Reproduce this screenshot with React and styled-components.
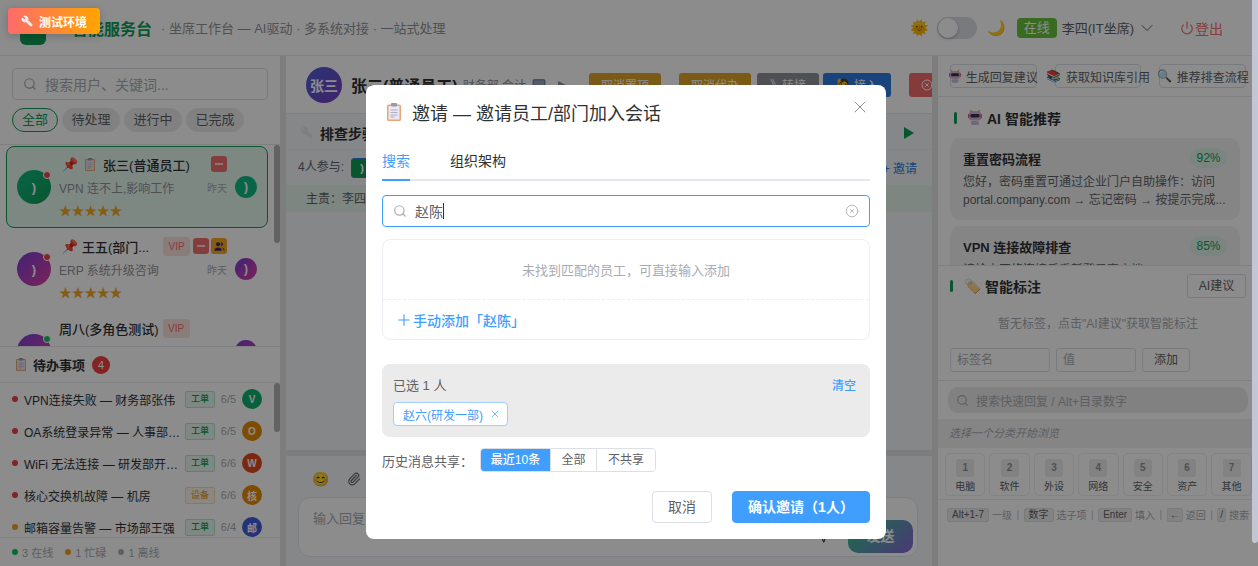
import React from 'react'
import styled, { createGlobalStyle } from 'styled-components'
import { Search, ChevronDown, Power, X, Plus, CircleX, Send, Wrench, Paperclip, Users, Monitor } from 'lucide-react'

const GlobalStyle = createGlobalStyle`
  * { box-sizing: border-box; }
  html, body { margin: 0; padding: 0; height: 100%; overflow: hidden; }
  body {
    font-family: "Liberation Sans", "Noto Sans CJK SC", sans-serif;
    color: #303133;
    background: #fff;
  }
`

const green = '#0f9d58'
const blue = '#409eff'

const Page = styled.div`
  position: relative;
  width: 1258px;
  height: 566px;
  overflow: hidden;
  display: flex;
  flex-direction: column;
`

/* ---------- header ---------- */
const Header = styled.header`
  height: 56px;
  flex: none;
  display: flex;
  align-items: center;
  padding: 0 35px 0 20px;
  border-bottom: 1px solid #e4e7ed;
  background: #fff;
`
const Logo = styled.div`
  width: 26px;
  height: 26px;
  border-radius: 6px;
  background: ${green};
  margin-right: 26px;
  margin-top: 8px;
`
const Brand = styled.div`
  font-size: 16px;
  font-weight: 700;
  color: ${green};
  white-space: nowrap;
`
const Tagline = styled.div`
  margin-left: 9px;
  font-size: 13px;
  color: #909399;
  white-space: nowrap;
`
const HeaderRight = styled.div`
  margin-left: auto;
  display: flex;
  align-items: center;
`
const Toggle = styled.div`
  width: 40px;
  height: 22px;
  border-radius: 11px;
  background: #dcdfe6;
  margin: 0 10px 0 8px;
  padding: 1px;
  span {
    display: block;
    width: 20px;
    height: 20px;
    border-radius: 50%;
    background: #fff;
    box-shadow: 0 1px 3px rgba(0, 0, 0, 0.3);
  }
`
const Emoji = styled.span`
  font-size: ${(p) => p.$size || 14}px;
  line-height: 1;
  flex: none;
  font-style: normal;
  margin-left: ${(p) => p.$ml || 0}px;
  margin-right: ${(p) => p.$mr || 0}px;
`
const OnlineTag = styled.div`
  margin-left: 11px;
  width: 40px;
  height: 20px;
  border-radius: 4px;
  background: #67c23a;
  color: #fff;
  font-size: 13px;
  line-height: 20px;
  text-align: center;
`
const AgentName = styled.div`
  margin-left: 5px;
  font-size: 13px;
  color: #606266;
  display: flex;
  align-items: center;
  gap: 3px;
  white-space: nowrap;
`
const Logout = styled.div`
  margin-left: 23px;
  color: #f56c6c;
  font-size: 14px;
  display: flex;
  align-items: center;
  gap: 1px;
`

/* ---------- small drawn icons ---------- */
const ClipboardIcon = ({ h = 14 }) => (
  <svg width={(h * 14) / 18} height={h} viewBox="0 0 14 18" style={{ flex: 'none' }}>
    <rect x="0" y="1.5" width="14" height="16.5" rx="1.5" fill="#e8a678" />
    <rect x="1.5" y="3" width="11" height="13.5" fill="#ece8f2" />
    <rect x="4" y="0" width="6" height="3.5" rx="1" fill="#9a9aa6" />
    <path d="M3.5 7h7M3.5 9.5h7M3.5 12h7M3.5 14h4" stroke="#b0aec4" strokeWidth="1" />
  </svg>
)
const RobotIcon = ({ size = 14 }) => (
  <svg width={size} height={size * 1.15} viewBox="0 0 14 16" style={{ flex: 'none' }}>
    <path d="M3 4 L1.5 0.5 L5 2.5 H9 L12.5 0.5 L11 4Z" fill="#e8a63c" />
    <rect x="1" y="2.5" width="12" height="9" rx="2.5" fill="#d9b4d8" />
    <rect x="2.5" y="5" width="9" height="3.5" rx="1" fill="#30364a" />
    <rect x="0" y="5" width="1.5" height="4" fill="#e85a8a" />
    <rect x="12.5" y="5" width="1.5" height="4" fill="#e85a8a" />
    <rect x="3" y="12" width="8" height="4" rx="1.5" fill="#c9c4dc" />
  </svg>
)
const Spanner = styled(Wrench)`
  flex: none;
  transform: scaleX(-1);
`
const DeviceIcon = styled(Monitor)`
  flex: none;
  margin-left: 6px;
  color: #5a7aa0;
`

/* ---------- columns ---------- */
const Columns = styled.div`
  flex: 1;
  min-height: 0;
  display: flex;
`
const Left = styled.aside`
  width: 280px;
  flex: none;
  display: flex;
  flex-direction: column;
  background: #fff;
`
const Gutter = styled.div`
  width: 6px;
  flex: none;
  background: #e4e4e4;
`
const Center = styled.main`
  width: 646px;
  flex: none;
  display: flex;
  flex-direction: column;
  background: #f5f6f8;
`
const Right = styled.aside`
  flex: 1;
  min-width: 0;
  display: flex;
  flex-direction: column;
  background: #fff;
`

/* ---------- left: sessions ---------- */
const SearchArea = styled.div`
  padding: 12px 12px 12px;
  border-bottom: 1px solid #e8e8e8;
`
const SearchBox = styled.div`
  height: 32px;
  border: 1px solid #dcdfe6;
  border-radius: 4px;
  display: flex;
  align-items: center;
  gap: 8px;
  padding: 0 10px;
  font-size: 14px;
  color: #a8abb2;
  white-space: nowrap;
`
const Chips = styled.div`
  display: flex;
  gap: 4px;
  margin-top: 8px;
`
const Chip = styled.div`
  width: ${(p) => p.$w}px;
  height: 24px;
  text-align: center;
  border-radius: 12px;
  font-size: 13px;
  line-height: 22px;
  color: ${(p) => (p.$active ? green : '#606266')};
  background: ${(p) => (p.$active ? '#f6fbf8' : '#ececec')};
  border: 1px solid ${(p) => (p.$active ? green : '#ececec')};
`
const SessionList = styled.div`
  position: relative;
  flex: 1;
  min-height: 0;
  overflow: hidden;
  padding-top: 1px;
`
const Thumb = styled.div`
  position: absolute;
  right: 0;
  top: ${(p) => p.$top}px;
  width: 6px;
  height: ${(p) => p.$h}px;
  border-radius: 3px;
  background: #b3b3b3;
`
const SessionCard = styled.div`
  width: 262px;
  height: 82px;
  flex: none;
  margin-left: 6px;
  padding: 9px 10px;
  display: flex;
  align-items: center;
  border-radius: 8px;
  border: 1px solid ${(p) => (p.$active ? green : 'transparent')};
  background: ${(p) => (p.$active ? '#e6f7ee' : 'transparent')};
`
const Avatar = styled.div`
  position: relative;
  flex: none;
  width: ${(p) => p.$size}px;
  height: ${(p) => p.$size}px;
  border-radius: 50%;
  background: ${(p) => p.$bg};
  color: #fff;
  font-size: ${(p) => p.$font || 12}px;
  font-weight: 700;
  display: flex;
  align-items: center;
  justify-content: center;
`
const StatusDot = styled.i`
  position: absolute;
  top: 1px;
  right: 0;
  width: 8px;
  height: 8px;
  border-radius: 50%;
  border: 1px solid #fff;
  background: ${(p) => p.$color};
`
const SessionBody = styled.div`
  width: 168px;
  flex: none;
  margin: 0 8px;
  display: flex;
  flex-direction: column;
  gap: 3px;
`
const Row = styled.div`
  height: 20px;
  display: flex;
  align-items: center;
  justify-content: ${(p) => (p.$between ? 'space-between' : 'flex-start')};
  gap: ${(p) => p.$gap || 0}px;
  white-space: nowrap;
`
const Name = styled.span`
  font-size: 13px;
  font-weight: 500;
  color: #303133;
`
const Sub = styled.span`
  font-size: 12px;
  color: #909399;
`
const TimeText = styled.span`
  font-size: 10px;
  color: #a8abb2;
`
const Stars = styled.span`
  font-size: 13px;
  letter-spacing: -0.4px;
  margin-top: -2px;
  color: #f5a623;
`
const VipTag = styled.span`
  width: 27px;
  height: 19px;
  margin-left: ${(p) => p.$ml}px;
  border-radius: 3px;
  background: #fde2e2;
  color: #f56c6c;
  font-size: 10px;
  line-height: 19px;
  text-align: center;
`
const Badge = styled.span`
  width: 16px;
  height: 16px;
  border-radius: 3px;
  background: ${(p) => p.$bg};
  display: flex;
  align-items: center;
  justify-content: center;
  color: #3b2a70;
  margin-left: ${(p) => (p.$first ? 'auto' : '0')};
  i {
    width: 8px;
    height: 2px;
    background: #fbd5d5;
  }
`

/* ---------- left: todo ---------- */
const TodoPanel = styled.section`
  flex: none;
  height: 220px;
  border-top: 1px solid #e4e7ed;
  display: flex;
  flex-direction: column;
`
const TodoHead = styled.div`
  height: 36px;
  flex: none;
  display: flex;
  align-items: center;
  gap: 7px;
  padding: 0 0 0 16px;
  border-bottom: 1px solid #ebeef5;
  font-size: 13px;
  font-weight: 700;
`
const CountBadge = styled.span`
  width: 18px;
  height: 18px;
  border-radius: 50%;
  background: #f04040;
  color: #fff;
  font-size: 11px;
  line-height: 18px;
  text-align: center;
  font-weight: 500;
`
const TodoList = styled.div`
  position: relative;
  flex: 1;
  min-height: 0;
  overflow: hidden;
`
const TodoRow = styled.div`
  height: 32px;
  display: flex;
  align-items: center;
  padding-left: 12px;
  padding-right: 18px;
`
const TodoDot = styled.i`
  width: 6px;
  height: 6px;
  border-radius: 50%;
  flex: none;
  background: ${(p) => p.$color};
`
const TodoText = styled.span`
  width: 158px;
  flex: none;
  margin-left: 6px;
  font-size: 12px;
  white-space: nowrap;
  overflow: hidden;
  text-overflow: ellipsis;
`
const KindTag = styled.span`
  flex: none;
  width: 30px;
  height: 17px;
  margin-left: 3px;
  border-radius: 2px;
  font-size: 9px;
  line-height: 15px;
  text-align: center;
  font-weight: 500;
  color: ${(p) => (p.$warn ? '#e6a23c' : green)};
  background: ${(p) => (p.$warn ? '#fdf6ec' : '#e9f7ef')};
  border: 1px solid ${(p) => (p.$warn ? '#f5dab1' : '#b3e5c8')};
`
const TodoDate = styled.span`
  flex: none;
  width: 27px;
  text-align: center;
  font-size: 11px;
  color: #a8abb2;
`
const TodoFoot = styled.div`
  height: 29px;
  flex: none;
  border-top: 1px solid #ebeef5;
  display: flex;
  align-items: center;
  gap: 12px;
  padding-left: 12px;
  font-size: 11px;
  color: #a8abb2;
`
const FootItem = styled.span`
  display: flex;
  align-items: center;
  gap: 4px;
`
const FootDot = styled.i`
  width: 6px;
  height: 6px;
  border-radius: 50%;
  background: ${(p) => p.$color};
`

/* ---------- center ---------- */
const ChatHead = styled.div`
  height: 58px;
  flex: none;
  display: flex;
  align-items: center;
  padding: 0 0 0 20px;
  background: #fff;
  border-bottom: 1px solid #e4e7ed;
  white-space: nowrap;
  overflow: hidden;
`
const ChatName = styled.span`
  margin-left: 9px;
  font-size: 16px;
  font-weight: 700;
`
const ChatDept = styled.span`
  margin-left: 5px;
  font-size: 12px;
  color: #909399;
`
const ActionBtn = styled.div`
  flex: none;
  height: 24px;
  width: ${(p) => p.$w}px;
  margin-left: ${(p) => p.$ml}px;
  border-radius: 3px;
  background: ${(p) => p.$bg};
  color: #fff;
  font-size: 12px;
  display: flex;
  align-items: center;
  justify-content: ${(p) => (p.$start ? 'flex-start' : 'center')};
  padding-left: ${(p) => (p.$start ? 12 : 0)}px;
  gap: 3px;
`
const StepsBar = styled.div`
  height: 36px;
  flex: none;
  display: flex;
  align-items: center;
  justify-content: space-between;
  padding: 2px 18px 0 14px;
  font-size: 14px;
  font-weight: 700;
  border-bottom: 1px solid #ebeef5;
`
const PlayMark = styled.div`
  width: 0;
  height: 0;
  flex: none;
  margin-left: ${(p) => p.$ml || 0}px;
  border-left: ${(p) => p.$w || 10}px solid ${(p) => p.$color || green};
  border-top: ${(p) => (p.$w ? 4 : 6)}px solid transparent;
  border-bottom: ${(p) => (p.$w ? 4 : 6)}px solid transparent;
`
const MemberBar = styled.div`
  height: 35px;
  flex: none;
  display: flex;
  align-items: center;
  justify-content: space-between;
  padding: 0 15px 0 12px;
  font-size: 12px;
  color: #606266;
`
const InviteLink = styled.span`
  color: #2f7de1;
  font-size: 12px;
`
const SquareAvatar = styled.span`
  display: inline-block;
  width: 22px;
  height: 20px;
  margin-left: 7px;
  vertical-align: middle;
  border-radius: 3px;
  background: ${green};
  border: 1px solid #2f7de1;
  color: #fff;
  font-size: 11px;
  font-weight: 700;
  line-height: 18px;
  text-align: center;
`
const LeadStrip = styled.div`
  height: 27px;
  flex: none;
  padding: 1px 0 0 20px;
  font-size: 12px;
  line-height: 27px;
  color: #606266;
  background: #e3f4ea;
`
const ChatFill = styled.div`
  flex: 1;
`
const Divider = styled.div`
  height: 6px;
  flex: none;
  background: #e4e4e4;
`
const Composer = styled.div`
  height: 110px;
  flex: none;
  padding: 12px 14px 9px 12px;
  background: #f5f6f8;
`
const ComposerTools = styled.div`
  display: flex;
  gap: 18px;
  padding-left: 14px;
  height: 22px;
  align-items: center;
  color: #606266;
`
const InputBox = styled.div`
  position: relative;
  height: 60px;
  margin-top: 7px;
  border: 1px solid #e4e7ed;
  border-radius: 12px;
  background: #fff;
  padding: 10px 14px;
  font-size: 13px;
  color: #a8abb2;
`
const SendBtn = styled.div`
  position: absolute;
  right: 4px;
  bottom: 3px;
  width: 65px;
  height: 33px;
  border-radius: 10px;
  background: linear-gradient(135deg, #2cc98a, #8a67d8);
  color: #fff;
  font-size: 14px;
  font-weight: 700;
  line-height: 33px;
  text-align: center;
`
const SendMark = styled.div`
  position: absolute;
  right: 88px;
  bottom: 13px;
  color: #303133;
  line-height: 0;
`

/* ---------- right ---------- */
const AssistBar = styled.div`
  height: 41px;
  flex: none;
  display: flex;
  gap: 18px;
  padding: 8px 12px 0 12px;
  border-bottom: 1px solid #e4e7ed;
`
const AssistBtn = styled.div`
  flex: 1 1 0;
  min-width: 0;
  height: 24px;
  border: 1px solid #dcdfe6;
  border-radius: 4px;
  display: flex;
  align-items: center;
  justify-content: center;
  gap: 5px;
  font-size: 12px;
  color: #606266;
  white-space: nowrap;
`
const RecoArea = styled.div`
  flex: 1;
  min-height: 0;
  overflow: hidden;
  padding: 0 18px 0 12px;
`
const SectionTitle = styled.div`
  height: 41px;
  display: flex;
  align-items: center;
  font-size: 14px;
  font-weight: 700;
  padding-left: 4px;
`
const TitleBar = styled.i`
  width: 3px;
  height: 12px;
  border-radius: 2px;
  background: ${green};
  margin-right: 11px;
`
const RecoCard = styled.div`
  height: 82px;
  margin-bottom: 6px;
  padding: 10px 13px;
  border-radius: 10px;
  background: #f2f3f5;
`
const RecoHead = styled.div`
  height: 20px;
  display: flex;
  align-items: center;
  justify-content: space-between;
  font-size: 13px;
  font-weight: 700;
`
const Score = styled.span`
  width: 37px;
  height: 20px;
  border-radius: 10px;
  background: #e1f3e8;
  color: ${green};
  font-size: 12px;
  font-weight: 400;
  line-height: 20px;
  text-align: center;
`
const RecoText = styled.div`
  margin-top: 5px;
  font-size: 12px;
  line-height: 18px;
  color: #606266;
`
const TagPanel = styled.section`
  flex: none;
  height: 115px;
  border-top: 1px solid #e4e7ed;
  padding: 8px 12px 0 12px;
  background: #fff;
`
const TagHead = styled.div`
  display: flex;
  align-items: center;
  height: 24px;
  font-size: 14px;
  font-weight: 700;
`
const GhostBtn = styled.div`
  margin-left: ${(p) => (p.$inline ? '0' : 'auto')};
  padding: 0;
  width: ${(p) => p.$w}px;
  height: 24px;
  border: 1px solid #dcdfe6;
  border-radius: 3px;
  text-align: center;
  font-size: 12px;
  font-weight: 400;
  line-height: 22px;
  color: #606266;
`
const EmptyHint = styled.div`
  height: 50px;
  text-align: center;
  font-size: 12px;
  line-height: 52px;
  color: #a8abb2;
`
const TagForm = styled.div`
  display: flex;
  gap: 6px;
`
const FakeInput = styled.div`
  width: ${(p) => p.$w}px;
  height: 24px;
  border: 1px solid #dcdfe6;
  border-radius: 3px;
  padding-left: 6px;
  font-size: 12px;
  line-height: 22px;
  color: #a8abb2;
`
const QuickPanel = styled.section`
  flex: none;
  height: 186px;
  border-top: 1px solid #e4e7ed;
  background: #fff;
`
const QuickSearch = styled.div`
  height: 26px;
  margin: 6px 10px 6px 10px;
  border-radius: 10px;
  background: #ececec;
  display: flex;
  align-items: center;
  gap: 7px;
  padding-left: 8px;
  font-size: 12px;
  color: #a8abb2;
  white-space: nowrap;
`
const CrumbBar = styled.div`
  height: 29px;
  padding-left: 11px;
  background: #f2f2f2;
  font-size: 11px;
  font-style: italic;
  line-height: 29px;
  color: #a8abb2;
`
const TileGrid = styled.div`
  display: flex;
  gap: 4px;
  padding: 5px 0 0 7px;
  height: 52px;
  border-bottom: 1px solid #ebeef5;
`
const Tile = styled.div`
  width: 40.4px;
  height: 43px;
  flex: none;
  border: 1px solid #ebeef5;
  border-radius: 5px;
  display: flex;
  flex-direction: column;
  align-items: center;
  gap: 1px;
  padding-top: 5px;
  font-size: 10px;
  color: #606266;
`
const TileNum = styled.span`
  width: 18px;
  height: 18px;
  border-radius: 3px;
  background: #ededed;
  color: #909399;
  font-weight: 700;
  font-size: 10px;
  line-height: 18px;
  text-align: center;
`
const KeyHints = styled.div`
  display: flex;
  align-items: center;
  padding: 7px 0 0 9px;
  font-size: 10px;
  color: #a8abb2;
  white-space: nowrap;
`
const Kbd = styled.span`
  height: 14px;
  padding: 0 ${(p) => p.$pad || 4}px;
  border-radius: 2px;
  background: #ededed;
  border: 1px solid #e0e0e0;
  color: #606266;
  font-size: 10px;
  line-height: 12px;
  margin-right: 3px;
`
const Sep = styled.span`
  margin: 0 4.5px;
  color: #c0c4cc;
`

/* ---------- dialog ---------- */
const Overlay = styled.div`
  position: absolute;
  inset: 0;
  background: rgba(0, 0, 0, 0.45);
  display: flex;
  justify-content: center;
  padding-right: 6px;
  padding-top: 85px;
`
const PageScroll = styled.div`
  position: absolute;
  top: 0;
  right: 0;
  width: 6px;
  height: 543px;
  background: #c0c8d4;
  border-radius: 0 0 3px 3px;
`
const EnvBadge = styled.div`
  position: absolute;
  top: 8px;
  left: 8px;
  width: 92px;
  height: 26px;
  border-radius: 4px;
  background: linear-gradient(90deg, #ff6b6b, #ffa500);
  box-shadow: 0 2px 8px rgba(0, 0, 0, 0.2);
  color: #fff;
  font-size: 12px;
  font-weight: 700;
  display: flex;
  align-items: center;
  justify-content: center;
  gap: 6px;
`
const Dialog = styled.div`
  width: 520px;
  height: 454px;
  background: #fff;
  border-radius: 8px;
  padding: 0 16px;
`
const DialogHead = styled.div`
  height: 59px;
  display: flex;
  align-items: center;
  padding: 0 0 5px 5px;
  font-size: 18px;
  color: #303133;
  gap: 11px;
  position: relative;
  white-space: nowrap;
`
const CloseBtn = styled.div`
  position: absolute;
  right: 0;
  top: 12px;
  color: #909399;
  line-height: 0;
`
const Tabs = styled.div`
  display: flex;
  gap: 40px;
  height: 37px;
  border-bottom: 2px solid #e4e7ed;
`
const TabItem = styled.div`
  height: 37px;
  font-size: 14px;
  line-height: 34px;
  color: ${(p) => (p.$active ? blue : '#303133')};
  border-bottom: ${(p) => (p.$active ? `2px solid ${blue}` : 'none')};
`
const SearchField = styled.div`
  margin-top: 14px;
  height: 32px;
  border: 1px solid ${blue};
  border-radius: 4px;
  display: flex;
  align-items: center;
  padding: 0 10px;
  font-size: 14px;
  color: #606266;
`
const FieldValue = styled.span`
  margin-left: 8px;
`
const Caret = styled.i`
  width: 1px;
  height: 16px;
  background: #303133;
`
const ClearIcon = styled(CircleX)`
  margin-left: auto;
  color: #a8abb2;
`
const ResultBox = styled.div`
  margin-top: 12px;
  height: 101px;
  border: 1px solid #ebeef5;
  border-radius: 8px;
`
const NoResult = styled.div`
  height: 60px;
  border-bottom: 1px dashed #ebeef5;
  text-align: center;
  font-size: 13px;
  line-height: 61px;
  color: #a8abb2;
`
const ManualAdd = styled.div`
  height: 40px;
  display: flex;
  align-items: center;
  padding-left: 12px;
  font-size: 14px;
  font-weight: 500;
  color: ${blue};
`
const SelectedBox = styled.div`
  margin-top: 24px;
  height: 73px;
  border-radius: 8px;
  background: #ebebeb;
  padding: 10px 11px;
`
const SelectedHead = styled.div`
  display: flex;
  justify-content: space-between;
  align-items: center;
  height: 20px;
  padding-right: 3px;
  font-size: 13px;
  color: #606266;
`
const ClearLink = styled.span`
  font-size: 12px;
  font-weight: 500;
  color: ${blue};
`
const PersonTag = styled.div`
  display: inline-flex;
  align-items: center;
  gap: 6px;
  margin-top: 8px;
  height: 24px;
  padding: 0 6px 0 9px;
  border: 1px solid #a0cfff;
  border-radius: 4px;
  background: #fff;
  font-size: 12px;
  color: ${blue};
`
const ShareRow = styled.div`
  margin-top: 11px;
  display: flex;
  align-items: center;
  height: 24px;
  font-size: 13px;
  color: #606266;
`
const Segments = styled.div`
  margin-left: 7px;
  display: flex;
  border: 1px solid #dcdfe6;
  border-radius: 4px;
  overflow: hidden;
  height: 24px;
`
const Segment = styled.div`
  width: ${(p) => p.$w}px;
  text-align: center;
  font-size: 12px;
  line-height: 22px;
  font-weight: ${(p) => (p.$on ? 500 : 400)};
  color: ${(p) => (p.$on ? '#fff' : '#606266')};
  background: ${(p) => (p.$on ? blue : '#fff')};
  & + & {
    border-left: 1px solid #dcdfe6;
  }
`
const DialogFoot = styled.div`
  margin-top: 19px;
  display: flex;
  justify-content: flex-end;
  gap: 20px;
`
const FootBtn = styled.div`
  width: ${(p) => p.$w}px;
  height: 32px;
  border-radius: 4px;
  border: 1px solid ${(p) => (p.$primary ? blue : '#dcdfe6')};
  background: ${(p) => (p.$primary ? blue : '#fff')};
  color: ${(p) => (p.$primary ? '#fff' : '#606266')};
  font-size: 14px;
  font-weight: ${(p) => (p.$primary ? 600 : 400)};
  line-height: 30px;
  text-align: center;
`

const purple = 'linear-gradient(135deg,#7a3fd9,#e040a0)'
const sessions = [
  { active: true, pin: true, doc: true, name: '张三(普通员工)', sub: 'VPN 连不上,影响工作', bg: 'linear-gradient(135deg,#10b981,#0f9d58)', dot: '#f04040', mini: '#10b981', badges: ['red'] },
  { pin: true, name: '王五(部门...', vip: 12, sub: 'ERP 系统升级咨询', bg: purple, dot: '#f04040', mini: purple, badges: ['red', 'amber'] },
  { name: '周八(多角色测试)', vip: 2, sub: '权限申请', bg: purple, dot: '#10c060', mini: purple, badges: [] },
]

const todos = [
  { text: 'VPN连接失败 — 财务部张伟', color: '#f04040', date: '6/5', ch: 'V', bg: '#10b070' },
  { text: 'OA系统登录异常 — 人事部李娜', color: '#f04040', date: '6/5', ch: 'O', bg: '#e68a00' },
  { text: 'WiFi 无法连接 — 研发部开发组', color: '#f04040', date: '6/6', ch: 'W', bg: '#e04a20' },
  { text: '核心交换机故障 — 机房', color: '#f04040', date: '6/6', ch: '核', bg: '#e68a00', warn: true },
  { text: '邮箱容量告警 — 市场部王强', color: '#f0a020', date: '6/4', ch: '邮', bg: '#3f5fd9' },
]

const tiles = ['电脑', '软件', '外设', '网络', '安全', '资产', '其他']

export default function App() {
  return (
    <Page>
      <GlobalStyle />
      <Header>
        <Logo />
        <Brand>智能服务台</Brand>
        <Tagline>· 坐席工作台 — AI驱动 · 多系统对接 · 一站式处理</Tagline>
        <HeaderRight>
          <Emoji $size={15}>🌞</Emoji>
          <Toggle><span /></Toggle>
          <Emoji $size={15}>🌙</Emoji>
          <OnlineTag>在线</OnlineTag>
          <AgentName>李四(IT坐席)<ChevronDown size={20} strokeWidth={1.2} /></AgentName>
          <Logout><Power size={14} />登出</Logout>
        </HeaderRight>
      </Header>

      <Columns>
        <Left>
          <SearchArea>
            <SearchBox><Search size={14} />搜索用户、关键词...</SearchBox>
            <Chips>
              <Chip $active $w={46}>全部</Chip>
              <Chip $w={58}>待处理</Chip>
              <Chip $w={58}>进行中</Chip>
              <Chip $w={58}>已完成</Chip>
            </Chips>
          </SearchArea>
          <SessionList>
            {sessions.map((s) => (
              <SessionCard key={s.name} $active={s.active}>
                <Avatar $size={34} $bg={s.bg} $font={13}>)<StatusDot $color={s.dot} /></Avatar>
                <SessionBody>
                  <Row $gap={2}>
                    {s.pin && <Emoji $size={13} $ml={3} $mr={s.doc ? 5 : 2}>📌</Emoji>}
                    {s.doc && <ClipboardIcon h={13} />}
                    {s.doc && <Emoji $size={1} $mr={4} />}
                    <Name>{s.name}</Name>
                    {s.vip && <VipTag $ml={s.vip}>VIP</VipTag>}
                    {s.badges.map((b, i) => (
                      <Badge key={b} $first={i === 0} $bg={b === 'red' ? '#f07070' : '#f5a623'}>
                        {b === 'red' ? <i /> : <Users size={11} fill="#3b2a70" strokeWidth={1} />}
                      </Badge>
                    ))}
                  </Row>
                  <Row $between><Sub>{s.sub}</Sub><TimeText>昨天</TimeText></Row>
                  <Row><Stars>★★★★★</Stars></Row>
                </SessionBody>
                <Avatar $size={22} $bg={s.mini}>)</Avatar>
              </SessionCard>
            ))}
            <Thumb $top={0} $h={98} />
          </SessionList>
          <TodoPanel>
            <TodoHead><ClipboardIcon h={13} />待办事项<CountBadge>4</CountBadge></TodoHead>
            <TodoList>
              {todos.map((t) => (
                <TodoRow key={t.text}>
                  <TodoDot $color={t.color} />
                  <TodoText>{t.text}</TodoText>
                  <KindTag $warn={t.warn}>{t.warn ? '设备' : '工单'}</KindTag>
                  <TodoDate>{t.date}</TodoDate>
                  <Avatar $size={20} $bg={t.bg} $font={10}>{t.ch}</Avatar>
                </TodoRow>
              ))}
              <Thumb $top={0} $h={49} />
            </TodoList>
            <TodoFoot>
              <FootItem><FootDot $color="#10c060" />3 在线</FootItem>
              <FootItem><FootDot $color="#f0a020" />1 忙碌</FootItem>
              <FootItem><FootDot $color="#b0b0b0" />1 离线</FootItem>
            </TodoFoot>
          </TodoPanel>
        </Left>
        <Gutter />
        <Center>
          <ChatHead>
            <Avatar $size={36} $bg="linear-gradient(135deg,#4a60d9,#7a3fc0)" $font={14}>张三</Avatar>
            <ChatName>张三(普通员工)</ChatName>
            <ChatDept>财务部 会计</ChatDept>
            <DeviceIcon size={14} fill="#9ab" />
            <PlayMark $w={8} $color="#909399" $ml={12} />
            <ActionBtn $w={72} $ml={23} $bg="#e0a428">取消置顶</ActionBtn>
            <ActionBtn $w={72} $ml={18} $bg="#e0a428">取消代办</ActionBtn>
            <ActionBtn $w={62} $ml={6} $bg="#909399">》转接</ActionBtn>
            <ActionBtn $w={68} $ml={4} $bg="#2f7de1"><Emoji $size={12}>🙋</Emoji>接入</ActionBtn>
            <ActionBtn $w={68} $ml={18} $bg="#f56c6c" $start><CircleX size={12} />结束</ActionBtn>
          </ChatHead>
          <StepsBar>
            <Row $gap={7}><Spanner size={13} color="#e8e8e8" fill="#e8e8e8" />排查步骤</Row>
            <PlayMark />
          </StepsBar>
          <MemberBar>
            <span>4人参与:<SquareAvatar>)</SquareAvatar></span>
            <InviteLink>+ 邀请</InviteLink>
          </MemberBar>
          <LeadStrip>主责：李四</LeadStrip>
          <ChatFill />
          <Divider />
          <Composer>
            <ComposerTools>
              <Emoji $size={14}>😊</Emoji>
              <Paperclip size={14} />
            </ComposerTools>
            <InputBox>
              输入回复
              <SendMark><Send size={14} /></SendMark>
              <SendBtn>发送</SendBtn>
            </InputBox>
          </Composer>
        </Center>
        <Gutter />
        <Right>
          <AssistBar>
            <AssistBtn><RobotIcon size={12} />生成回复建议</AssistBtn>
            <AssistBtn><Emoji $size={12}>📚</Emoji>获取知识库引用</AssistBtn>
            <AssistBtn><Emoji $size={12}>🔍</Emoji>推荐排查流程</AssistBtn>
          </AssistBar>
          <RecoArea>
            <SectionTitle><TitleBar /><RobotIcon size={14} /><Emoji $size={1} $mr={5} />AI 智能推荐</SectionTitle>
            <RecoCard>
              <RecoHead>重置密码流程<Score>92%</Score></RecoHead>
              <RecoText>您好，密码重置可通过企业门户自助操作：访问 portal.company.com → 忘记密码 → 按提示完成...</RecoText>
            </RecoCard>
            <RecoCard>
              <RecoHead>VPN 连接故障排查<Score>85%</Score></RecoHead>
              <RecoText>请检查网络连接后重新登录客户端</RecoText>
            </RecoCard>
          </RecoArea>
          <TagPanel>
            <TagHead>
              <TitleBar />
              <Emoji $size={14} $mr={4}>🏷️</Emoji>智能标注
              <GhostBtn $w={59}>AI建议</GhostBtn>
            </TagHead>
            <EmptyHint>暂无标签，点击"AI建议"获取智能标注</EmptyHint>
            <TagForm>
              <FakeInput $w={100}>标签名</FakeInput>
              <FakeInput $w={80}>值</FakeInput>
              <GhostBtn $w={48} $inline>添加</GhostBtn>
            </TagForm>
          </TagPanel>
          <QuickPanel>
            <QuickSearch><Search size={13} />搜索快速回复 / Alt+目录数字</QuickSearch>
            <CrumbBar>选择一个分类开始浏览</CrumbBar>
            <TileGrid>
              {tiles.map((t, i) => (
                <Tile key={t}><TileNum>{i + 1}</TileNum>{t}</Tile>
              ))}
            </TileGrid>
            <KeyHints>
              <Kbd>Alt+1-7</Kbd>一级<Sep>|</Sep>
              <Kbd>数字</Kbd>选子项<Sep>|</Sep>
              <Kbd>Enter</Kbd>填入<Sep>|</Sep>
              <Kbd $pad={2}>←</Kbd>返回<Sep>|</Sep>
              <Kbd $pad={2}>/</Kbd>搜索
            </KeyHints>
          </QuickPanel>
        </Right>
      </Columns>

      <Overlay>
        <Dialog>
          <DialogHead>
            <ClipboardIcon h={18} />邀请 — 邀请员工/部门加入会话
            <CloseBtn><X size={20} strokeWidth={1.2} /></CloseBtn>
          </DialogHead>
          <Tabs>
            <TabItem $active>搜索</TabItem>
            <TabItem>组织架构</TabItem>
          </Tabs>
          <SearchField>
            <Search size={14} color="#a8abb2" />
            <FieldValue>赵陈</FieldValue>
            <Caret />
            <ClearIcon size={14} strokeWidth={1.4} />
          </SearchField>
          <ResultBox>
            <NoResult>未找到匹配的员工，可直接输入添加</NoResult>
            <ManualAdd><Plus size={18} strokeWidth={1.5} />手动添加「赵陈」</ManualAdd>
          </ResultBox>
          <SelectedBox>
            <SelectedHead>已选 1 人<ClearLink>清空</ClearLink></SelectedHead>
            <PersonTag>赵六(研发一部)<X size={12} strokeWidth={1.4} /></PersonTag>
          </SelectedBox>
          <ShareRow>
            历史消息共享：
            <Segments>
              <Segment $on $w={69}>最近10条</Segment>
              <Segment $w={46}>全部</Segment>
              <Segment $w={59}>不共享</Segment>
            </Segments>
          </ShareRow>
          <DialogFoot>
            <FootBtn $w={60}>取消</FootBtn>
            <FootBtn $w={138} $primary>确认邀请（1人）</FootBtn>
          </DialogFoot>
        </Dialog>
      </Overlay>
      <PageScroll />
      <EnvBadge><Spanner size={12} color="#eee" fill="#eee" />测试环境</EnvBadge>
    </Page>
  )
}
